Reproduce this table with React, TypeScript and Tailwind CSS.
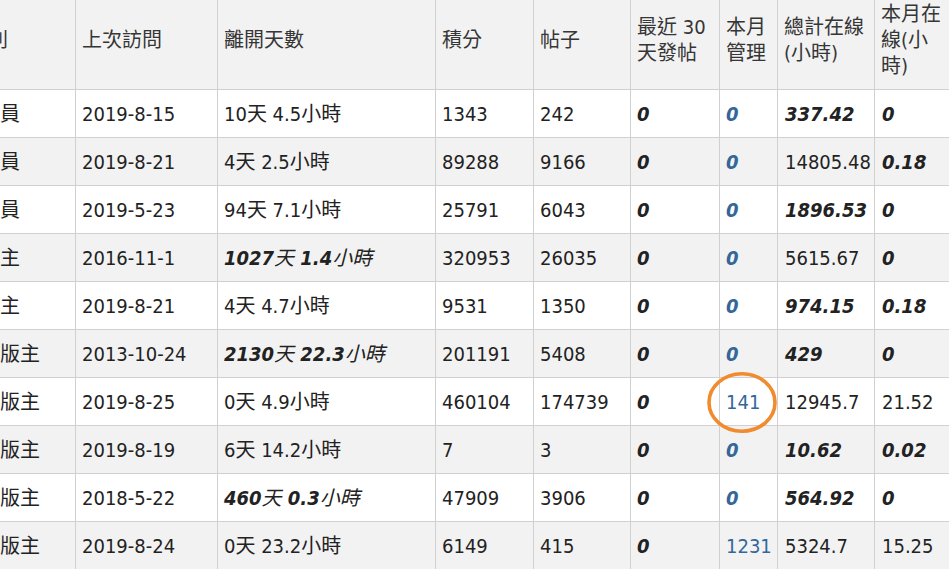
import React from "react";

type Cell = { t: string; b?: boolean; blue?: boolean };

const c = (t: string, b = false, blue = false): Cell => ({ t, b, blue });

const headers = [
  "會員級別",
  "上次訪問",
  "離開天數",
  "積分",
  "帖子",
  "最近 30 天發帖",
  "本月管理",
  "總計在線(小時)",
  "本月在線(小時)",
];

const rows: Cell[][] = [
  [c("普通會員"), c("2019-8-15"), c("10天 4.5小時"), c("1343"), c("242"), c("0", true), c("0", true, true), c("337.42", true), c("0", true)],
  [c("普通會員"), c("2019-8-21"), c("4天 2.5小時"), c("89288"), c("9166"), c("0", true), c("0", true, true), c("14805.48"), c("0.18", true)],
  [c("普通會員"), c("2019-5-23"), c("94天 7.1小時"), c("25791"), c("6043"), c("0", true), c("0", true, true), c("1896.53", true), c("0", true)],
  [c("超級版主"), c("2016-11-1"), c("1027天 1.4小時", true), c("320953"), c("26035"), c("0", true), c("0", true, true), c("5615.67"), c("0", true)],
  [c("超級版主"), c("2019-8-21"), c("4天 4.7小時"), c("9531"), c("1350"), c("0", true), c("0", true, true), c("974.15", true), c("0.18", true)],
  [c("論壇總版主"), c("2013-10-24"), c("2130天 22.3小時", true), c("201191"), c("5408"), c("0", true), c("0", true, true), c("429", true), c("0", true)],
  [c("論壇總版主"), c("2019-8-25"), c("0天 4.9小時"), c("460104"), c("174739"), c("0", true), c("141", false, true), c("12945.7"), c("21.52")],
  [c("論壇總版主"), c("2019-8-19"), c("6天 14.2小時"), c("7"), c("3"), c("0", true), c("0", true, true), c("10.62", true), c("0.02", true)],
  [c("論壇總版主"), c("2018-5-22"), c("460天 0.3小時", true), c("47909"), c("3906"), c("0", true), c("0", true, true), c("564.92", true), c("0", true)],
  [c("論壇總版主"), c("2019-8-24"), c("0天 23.2小時"), c("6149"), c("415"), c("0", true), c("1231", false, true), c("5324.7"), c("15.25")],
];

// CJK runs stay regular weight inside bold italic cells, like the original page
function Text({ s, bold }: { s: string; bold?: boolean }) {
  if (!bold) return <>{s}</>;
  const parts = s.split(/([\u3400-\u9fff]+)/).filter(Boolean);
  return (
    <span className="italic font-bold">
      {parts.map((p, i) =>
        /[\u3400-\u9fff]/.test(p) ? (
          <span key={i} className="font-normal">
            {p}
          </span>
        ) : (
          <span key={i}>{p}</span>
        )
      )}
    </span>
  );
}

export default function App() {
  return (
    <div className="w-[949px] h-[569px] overflow-hidden bg-white font-['DejaVu_Sans_Condensed','Liberation_Sans','Noto_Sans_CJK_TC',sans-serif] text-[20px]">
      <div className="-ml-[79px] w-[1034px] grid grid-cols-[155px_142px_218px_98px_97px_89px_58px_97px_80px]">
        {headers.map((h, i) => (
          <div
            key={h}
            className={`h-[90px] flex items-center pb-[9px] bg-[#f2f2f2] border-r border-b border-[#d0d0d0] leading-[26px] text-[#363636] pr-[4px] ${
              i === 0 ? "pl-[7px] whitespace-nowrap" : "pl-[6px]"
            }`}
          >
            {h}
          </div>
        ))}
        {rows.map((r, ri) =>
          r.map((cell, ci) => (
            <div
              key={`${ri}-${ci}`}
              className={`relative h-[48px] flex items-center whitespace-nowrap border-r border-b border-[#d0d0d0] pr-[2px] ${
                ri % 2 === 1 ? "bg-[#f2f2f2]" : "bg-white"
              } ${ci === 0 ? "pl-[19px]" : ci >= 7 ? "pl-[7px]" : "pl-[6px]"} ${
                cell.blue ? "text-[#336699]" : "text-[#222222]"
              }`}
            >
              <Text s={cell.t} bold={cell.b} />
              {ri === 6 && ci === 6 && (
                <svg
                  className="absolute z-10 left-[-13px] top-[-6px] overflow-visible"
                  width="70"
                  height="61"
                  viewBox="0 0 70 61"
                  fill="none"
                >
                  <ellipse cx="35" cy="30.5" rx="33" ry="28.7" stroke="#f28a2e" strokeWidth="3.6" />
                </svg>
              )}
            </div>
          ))
        )}
      </div>
    </div>
  );
}
